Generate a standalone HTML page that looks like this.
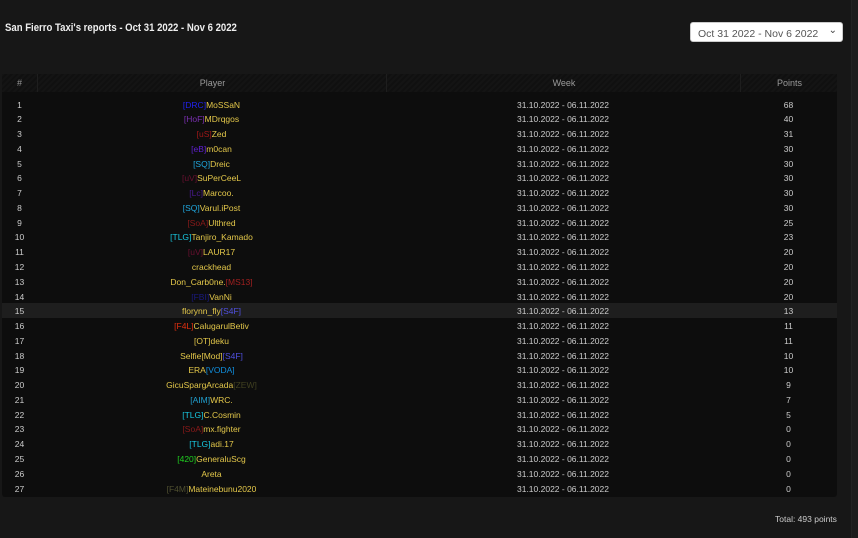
<!DOCTYPE html>
<html><head><meta charset="utf-8"><style>
body{margin:0;width:858px;height:538px;background:#171717;font-family:"Liberation Sans",sans-serif;overflow:hidden;position:relative}
.sb{position:absolute;left:851px;top:0;width:7px;height:538px;background:#1c1c1c;border-left:1px solid #222}
h1{position:absolute;left:5px;top:22px;margin:0;font-size:11px;font-weight:bold;color:#eee;white-space:nowrap;transform-origin:0 0;transform:scaleX(0.87)}
.sel{position:absolute;left:690px;top:22px;width:153px;height:20px;background:#fff;border-radius:3px;box-sizing:border-box;border:1px solid #ccc;font-size:10.5px;color:#555;padding:5px 0 0 7px}
.sel span{position:absolute;right:5px;top:2px;font-size:10px;color:#444}
.tbl{position:absolute;left:2px;top:74px;width:835px;height:423px;background:#0d0d0d;border-radius:3px}
.hd{height:18px;background:repeating-linear-gradient(135deg,#141414 0 2px,#101010 2px 4px);font-size:9px;color:#9a9a9a;position:relative}
.c{position:absolute;text-align:center}
.row{position:absolute;left:0;width:835px;height:14.77px;font-size:8.5px;color:#ccc}
.row .c{top:3px}
.c1{left:0;width:35px}.c2{left:35px;width:349px}.c3{left:384px;width:354px}.c4{left:738px;width:97px}
.hd .c2,.hd .c3,.hd .c4{border-left:1px solid #1e1e1e;height:18px;top:0;line-height:18px}
.hd .c1{line-height:18px;top:0}
.y{color:#e4c84a}
.tot{position:absolute;left:775px;top:514px;font-size:8.5px;color:#ccc}
</style></head><body>
<div class="sb"></div>
<h1>San Fierro Taxi's reports - Oct 31 2022 - Nov 6 2022</h1>
<div class="sel">Oct 31 2022 - Nov 6 2022<span>&#8964;</span></div>
<div class="tbl">
<div class="hd"><div class="c c1">#</div><div class="c c2">Player</div><div class="c c3">Week</div><div class="c c4">Points</div></div>
<div id="rows"></div>
</div>
<div class="tot">Total: 493 points</div>
<script>
var d=[
['<span style="color:#2222ee">[DRC]</span>MoSSaN',68],
['<span style="color:#7a30b0">[HoF]</span>MDrqgos',40],
['<span style="color:#a01818">[uS]</span>Zed',31],
['<span style="color:#6020d0">[eB]</span>m0can',30],
['<span style="color:#20a8e0">[SQ]</span>Dreic',30],
['<span style="color:#6a1030">[uV]</span>SuPerCeeL',30],
['<span style="color:#4a1a90">[Lc]</span>Marcoo.',30],
['<span style="color:#20a8e0">[SQ]</span>Varul.iPost',30],
['<span style="color:#8b1a1a">[SoA]</span>Ulthred',25],
['<span style="color:#18c8e0">[TLG]</span>Tanjiro_Kamado',23],
['<span style="color:#6a1030">[uV]</span>LAUR17',20],
['crackhead',20],
['Don_Carb0ne.<span style="color:#a02020">[MS13]</span>',20],
['<span style="color:#1a1a80">[FBI]</span>VanNi',20],
['florynn_fly<span style="color:#5050e0">[S4F]</span>',13],
['<span style="color:#e03010">[F4L]</span>CalugarulBetiv',11],
['[OT]deku',11],
['Selfie[Mod]<span style="color:#5050e0">[S4F]</span>',10],
['ERA<span style="color:#1090e0">[VODA]</span>',10],
['GicuSpargArcada<span style="color:#404020">[ZEW]</span>',9],
['<span style="color:#20a0d0">[AIM]</span>WRC.',7],
['<span style="color:#18c8e0">[TLG]</span>C.Cosmin',5],
['<span style="color:#8b1a1a">[SoA]</span>mx.fighter',0],
['<span style="color:#18c8e0">[TLG]</span>adi.17',0],
['<span style="color:#20d020">[420]</span>GeneraluScg',0],
['Areta',0],
['<span style="color:#505030">[F4M]</span>Mateinebunu2020',0]];
var h='';
d.forEach(function(r,i){
h+='<div class="row" style="top:'+(22.5+i*14.77)+'px;'+(i==14?'background:#1e1e1e':'')+'"><div class="c c1">'+(i+1)+'</div><div class="c c2 y">'+r[0]+'</div><div class="c c3">31.10.2022 - 06.11.2022</div><div class="c c4">'+r[1]+'</div></div>';
});
document.getElementById('rows').innerHTML=h;
</script>
</body></html>
